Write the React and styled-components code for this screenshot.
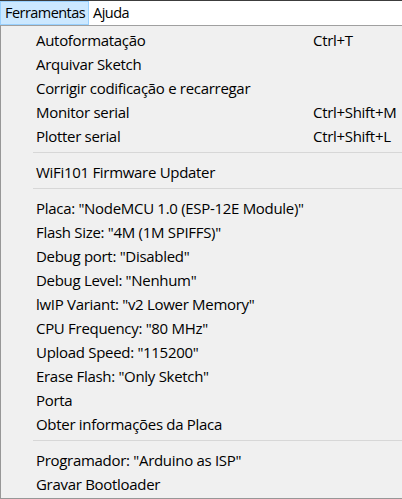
import React from "react";
import styled, { createGlobalStyle } from "styled-components";

const Global = createGlobalStyle`
    html, body {
        margin: 0;
        padding: 0;
        background: #ffffff;
        overflow: hidden;
    }
    body {
        font-family: "Open Sans", "Noto Sans", sans-serif;
        font-size: 15px;
        letter-spacing: -0.3px;
        color: #000000;
    }
`

const Window = styled.div`
    width: 402px;
    height: 499px;
    overflow: hidden;
    display: flex;
    flex-direction: column;
    border-top: 1px solid #3c3c3c;
    box-sizing: border-box;
`

const MenuBar = styled.div`
    display: flex;
    height: 24px;
    background: #ffffff;
    flex-shrink: 0;
`

const MenuTitle = styled.div`
    display: flex;
    align-items: center;
    height: 24px;
    box-sizing: border-box;
    padding: 0 3px 1px ${(p) => (p.$open ? "4px" : "3px")};
    font-size: 14.5px;
    letter-spacing: -0.55px;
    background: ${(p) => (p.$open ? "#cce8ff" : "transparent")};
    border: 1px solid ${(p) => (p.$open ? "#99d1ff" : "transparent")};
    white-space: nowrap;
`

const Dropdown = styled.div`
    width: 440px;
    flex: 1;
    background: #f0f0f0;
    border-top: 1px solid #a0a0a0;
    border-left: 1px solid #979797;
    border-bottom: 1px solid #979797;
    padding-top: 2px;
    box-sizing: border-box;
`

const Item = styled.div`
    display: grid;
    grid-template-columns: 277px auto;
    height: 24px;
    align-items: center;
    padding-left: 35px;
    padding-bottom: 1px;
    box-sizing: border-box;
    white-space: nowrap;
`

const Shortcut = styled.span`
    white-space: nowrap;
`

const Separator = styled.div`
    padding: 4px 0 7px 32px;
    &::after {
        content: "";
        display: block;
        height: 1px;
        background: #d7d7d7;
    }
`

const groups = [
    [
        ["Autoformatação", "Ctrl+T"],
        ["Arquivar Sketch"],
        ["Corrigir codificação e recarregar"],
        ["Monitor serial", "Ctrl+Shift+M"],
        ["Plotter serial", "Ctrl+Shift+L"],
    ],
    [["WiFi101 Firmware Updater"]],
    [
        ['Placa: "NodeMCU 1.0 (ESP-12E Module)"'],
        ['Flash Size: "4M (1M SPIFFS)"'],
        ['Debug port: "Disabled"'],
        ['Debug Level: "Nenhum"'],
        ['lwIP Variant: "v2 Lower Memory"'],
        ['CPU Frequency: "80 MHz"'],
        ['Upload Speed: "115200"'],
        ['Erase Flash: "Only Sketch"'],
        ["Porta"],
        ["Obter informações da Placa"],
    ],
    [['Programador: "Arduino as ISP"'], ["Gravar Bootloader"]],
];

function App() {
    return (
        <>
            <Global />
            <Window>
                <MenuBar>
                    <MenuTitle $open>Ferramentas</MenuTitle>
                    <MenuTitle>Ajuda</MenuTitle>
                </MenuBar>
                <Dropdown>
                    {groups.map((group, gi) => (
                        <React.Fragment key={gi}>
                            {gi > 0 && <Separator />}
                            {group.map(([label, shortcut]) => (
                                <Item key={label}>
                                    <span>{label}</span>
                                    {shortcut && <Shortcut>{shortcut}</Shortcut>}
                                </Item>
                            ))}
                        </React.Fragment>
                    ))}
                </Dropdown>
            </Window>
        </>
    );
}

export default App;
